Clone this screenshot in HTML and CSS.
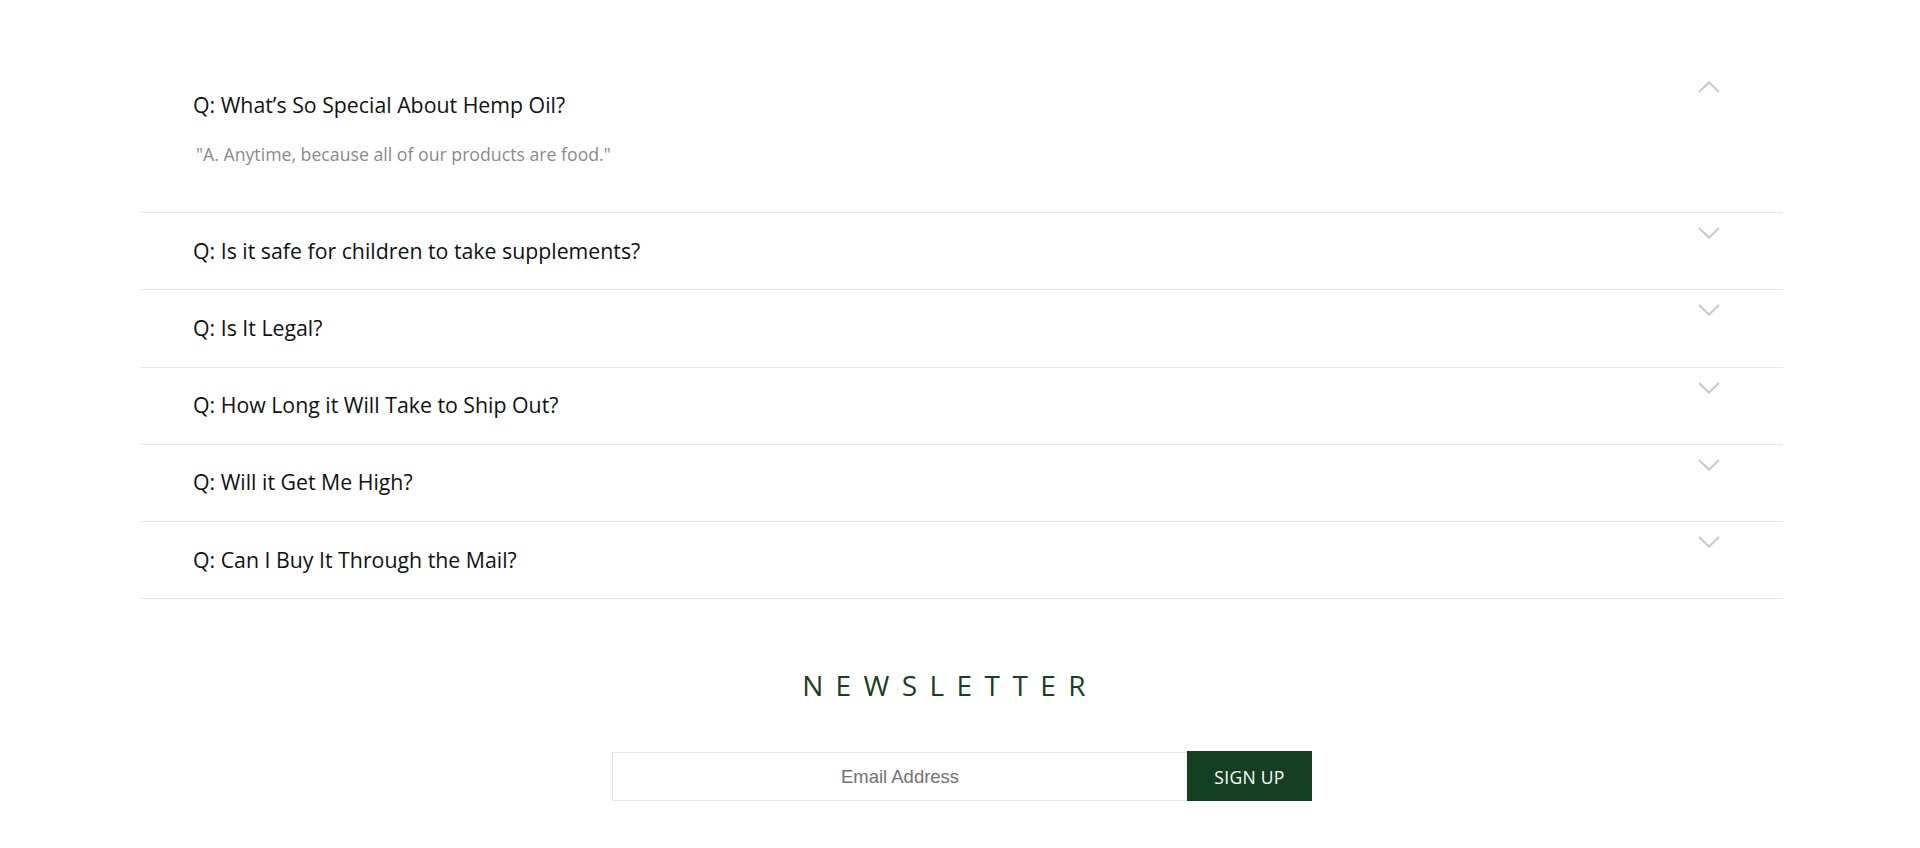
FILE: index.html
```html
<!DOCTYPE html>
<html lang="en">
<head>
<meta charset="utf-8">
<title>FAQ</title>
<link rel="stylesheet" href="styles.css">
</head>
<body>
<main class="page">
  <section class="faq">
    <div class="faq-item open">
      <div class="faq-head">
        <span class="faq-q">Q: What’s So Special About Hemp Oil?</span>
        <svg class="chev" width="22" height="12" viewBox="0 0 22 12"><path d="M1 11 L11 1.5 L21 11" fill="none" stroke="#c8c8c8" stroke-width="2"/></svg>
      </div>
      <p class="faq-a">"A. Anytime, because all of our products are food."</p>
    </div>
    <div class="faq-item">
      <div class="faq-head">
        <span class="faq-q">Q: Is it safe for children to take supplements?</span>
        <svg class="chev" width="22" height="12" viewBox="0 0 22 12"><path d="M1 1 L11 10.5 L21 1" fill="none" stroke="#c8c8c8" stroke-width="2"/></svg>
      </div>
    </div>
    <div class="faq-item">
      <div class="faq-head">
        <span class="faq-q">Q: Is It Legal?</span>
        <svg class="chev" width="22" height="12" viewBox="0 0 22 12"><path d="M1 1 L11 10.5 L21 1" fill="none" stroke="#c8c8c8" stroke-width="2"/></svg>
      </div>
    </div>
    <div class="faq-item">
      <div class="faq-head">
        <span class="faq-q">Q: How Long it Will Take to Ship Out?</span>
        <svg class="chev" width="22" height="12" viewBox="0 0 22 12"><path d="M1 1 L11 10.5 L21 1" fill="none" stroke="#c8c8c8" stroke-width="2"/></svg>
      </div>
    </div>
    <div class="faq-item">
      <div class="faq-head">
        <span class="faq-q">Q: Will it Get Me High?</span>
        <svg class="chev" width="22" height="12" viewBox="0 0 22 12"><path d="M1 1 L11 10.5 L21 1" fill="none" stroke="#c8c8c8" stroke-width="2"/></svg>
      </div>
    </div>
    <div class="faq-item">
      <div class="faq-head">
        <span class="faq-q">Q: Can I Buy It Through the Mail?</span>
        <svg class="chev" width="22" height="12" viewBox="0 0 22 12"><path d="M1 1 L11 10.5 L21 1" fill="none" stroke="#c8c8c8" stroke-width="2"/></svg>
      </div>
    </div>
  </section>

  <section class="newsletter">
    <h2 class="news-title">NEWSLETTER</h2>
    <form class="news-form">
      <input class="news-input" type="email" placeholder="Email Address">
      <button class="news-btn" type="button">SIGN UP</button>
    </form>
  </section>
</main>
</body>
</html>
```

FILE: styles.css
```css
* { box-sizing: border-box; }
html, body { margin: 0; padding: 0; background: #fff; }
body {
  font-family: "Open Sans", "DejaVu Sans", sans-serif;
  color: #111;
  width: 1920px;
  height: 848px;
  overflow: hidden;
}
.page {
  padding-top: 67px;
  padding-left: 141px;
  width: 1783px;
}
.faq {
  width: 1642px;
}
.faq-item {
  border-bottom: 1px solid #e6e6e6;
}
.faq-head {
  display: flex;
  align-items: center;
  height: 76.2px;
  padding-left: 52px;
  padding-right: 63px;
}
.faq-q {
  flex: 1;
  font-size: 21.3px;
  color: #111;
  padding-bottom: 2px;
}
.chev {
  align-self: flex-start;
  margin-top: 14px;
  display: block;
}
.faq-a {
  margin: 0;
  padding: 0.5px 52px 0 55px;
  height: 69px;
  font-size: 17.7px;
  line-height: 1.2;
  color: #8a8a8a;
}
.newsletter {
  display: flex;
  flex-direction: column;
  align-items: center;
}
.news-title {
  margin: 68px 0 0 0;
  padding-right: 24px;
  font-weight: 400;
  font-size: 28px;
  letter-spacing: 12.4px;
  color: #173f20;
  line-height: 36px;
}
.news-form {
  display: flex;
  margin-top: 49px;
}
.news-input {
  width: 575px;
  height: 49px;
  border: 1px solid #e5e5e5;
  border-right: none;
  text-align: center;
  font-family: "Liberation Sans", Arial, sans-serif;
  font-size: 18.5px;
  color: #333;
  outline: none;
}
.news-input::placeholder { color: #727272; }
.news-btn {
  width: 125px;
  height: 50px;
  margin-top: -1px;
  border: none;
  background: #153f21;
  color: #fff;
  font-family: "Open Sans", sans-serif;
  font-size: 17.5px;
  letter-spacing: 0.3px;
  padding-top: 3px;
}
```
